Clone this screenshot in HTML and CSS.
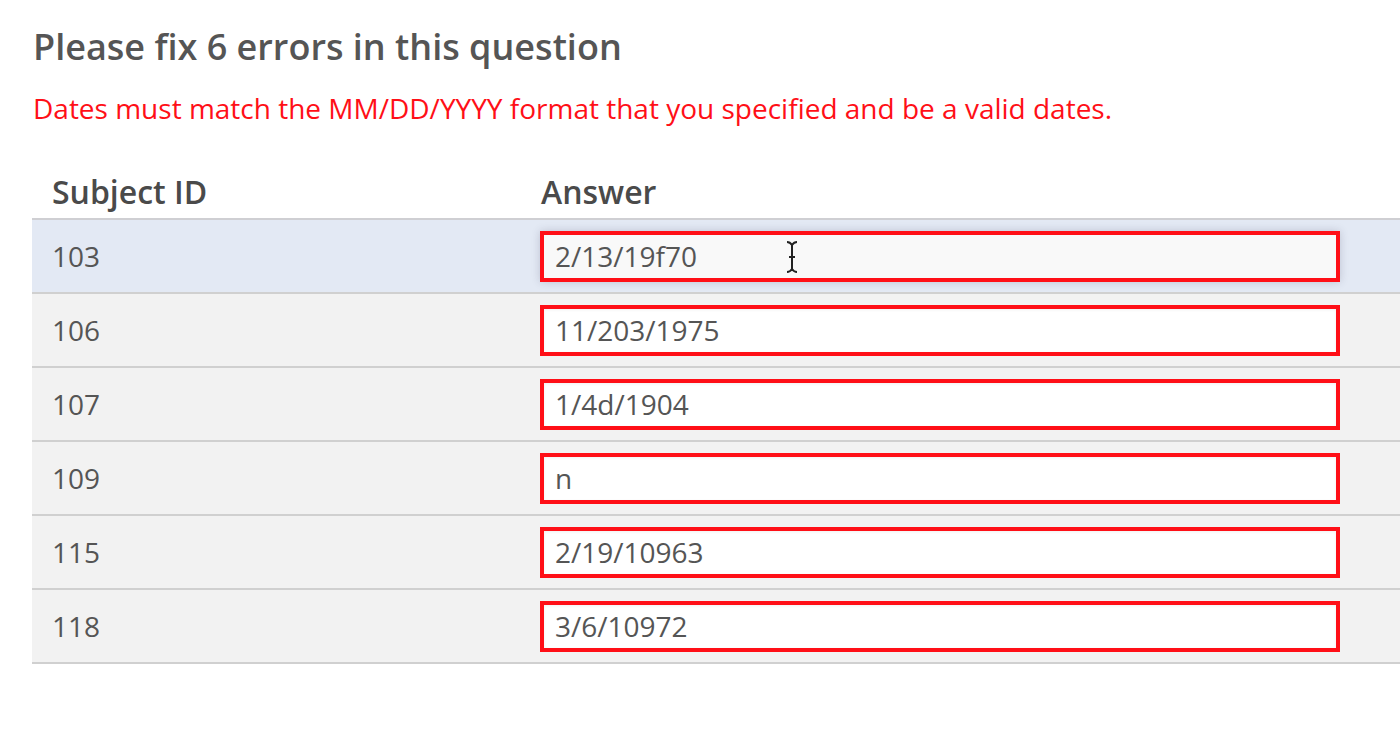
FILE: index.html
```html
<!DOCTYPE html>
<html>
<head>
<meta charset="utf-8">
<link rel="stylesheet" href="styles.css">
</head>
<body>
<main class="page">
  <h1 class="title">Please fix 6 errors in this question</h1>
  <p class="error-msg">Dates must match the MM/DD/YYYY format that you specified and be a valid dates.</p>
  <table class="grid">
    <thead>
      <tr>
        <th class="col-id">Subject ID</th>
        <th class="col-answer">Answer</th>
      </tr>
    </thead>
    <tbody>
      <tr class="row active">
        <td class="cell-id">103</td>
        <td class="cell-answer">
          <div class="field-wrap">
            <input class="field focused" type="text" value="2/13/19f70">
            <svg class="ibeam" width="14" height="34" viewBox="0 0 14 34">
              <path d="M2 2 Q5 2 7 5 Q9 2 12 2 M7 5 V29 M2 32 Q5 32 7 29 Q9 32 12 32 M4 17 H10" fill="none" stroke="#222" stroke-width="2"/>
            </svg>
          </div>
        </td>
      </tr>
      <tr class="row">
        <td class="cell-id">106</td>
        <td class="cell-answer"><input class="field" type="text" value="11/203/1975"></td>
      </tr>
      <tr class="row">
        <td class="cell-id">107</td>
        <td class="cell-answer"><input class="field" type="text" value="1/4d/1904"></td>
      </tr>
      <tr class="row">
        <td class="cell-id">109</td>
        <td class="cell-answer"><input class="field" type="text" value="n"></td>
      </tr>
      <tr class="row">
        <td class="cell-id">115</td>
        <td class="cell-answer"><input class="field" type="text" value="2/19/10963"></td>
      </tr>
      <tr class="row">
        <td class="cell-id">118</td>
        <td class="cell-answer"><input class="field" type="text" value="3/6/10972"></td>
      </tr>
    </tbody>
  </table>
</main>
</body>
</html>
```
FILE: styles.css
```css
html, body {
  margin: 0;
  padding: 0;
  background: #fff;
  overflow: hidden;
}
body {
  font-family: "Open Sans", "DejaVu Sans", sans-serif;
  color: #555;
}
.page {
  padding: 24px 0 0 32px;
}
.title {
  margin: 0 0 0 1px;
  font-size: 36px;
  font-weight: 600;
  line-height: 46px;
  color: #555;
}
.error-msg {
  margin: 22px 0 0 1px;
  font-size: 28px;
  line-height: 32px;
  color: #ff0f17;
}
.grid {
  margin-top: 44px;
  width: 1400px;
  border-collapse: collapse;
}
.grid th {
  text-align: left;
  font-size: 32px;
  font-weight: 600;
  color: #4a4a4a;
  padding: 0 0 5px 0;
  height: 45px;
  vertical-align: bottom;
  border-bottom: 2px solid #cfcfd3;
}
.col-id {
  width: 508px;
  padding-left: 20px !important;
  box-sizing: border-box;
}
.col-answer {
  padding-left: 1px !important;
}
.row td {
  height: 72px;
  padding: 0;
  border-bottom: 2px solid #d0d0d0;
  background: #f2f2f2;
  font-size: 28px;
  color: #555;
}
.row.active td {
  background: #e3e9f4;
}
.cell-id {
  padding-left: 20px !important;
}
.field-wrap {
  position: relative;
  width: 800px;
}
.field {
  display: block;
  box-sizing: border-box;
  width: 800px;
  height: 51px;
  border: 4px solid #ff0f17;
  background: #fff;
  padding: 0 11px;
  font-family: "Open Sans", "DejaVu Sans", sans-serif;
  font-size: 28px;
  color: #555;
  outline: none;
  box-shadow: inset 0 1px 3px rgba(0,0,0,0.06);
}
.field.focused {
  background: #f9f9f9;
  box-shadow: 0 0 8px rgba(60,60,90,0.22);
}
.ibeam {
  position: absolute;
  left: 245px;
  top: 9px;
}
```
